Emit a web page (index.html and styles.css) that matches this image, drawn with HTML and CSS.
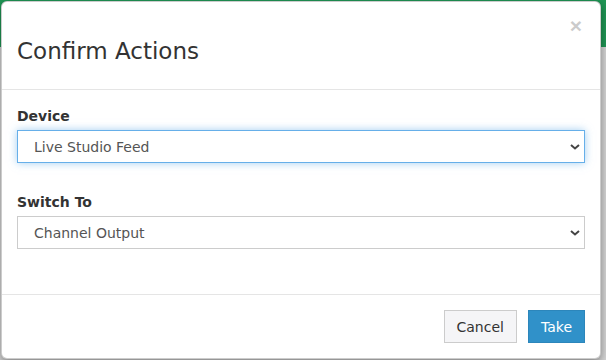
FILE: index.html
```html
<!DOCTYPE html>
<html lang="en">
<head>
  <meta charset="UTF-8">
  <meta name="viewport" content="width=device-width, initial-scale=1.0">
  <title>Confirm Actions</title>
  <link rel="stylesheet" href="styles.css">
</head>
<body>
  <!-- Page behind the dialog -->
  <div class="page">
    <div class="topbar"></div>
    <div class="backdrop"></div>
  </div>

  <!-- Confirm dialog -->
  <div class="modal">
    <div class="modal-header">
      <h4 class="modal-title">Confirm Actions</h4>
      <button type="button" class="close">&times;</button>
    </div>

    <div class="modal-body">
      <div class="form-group">
        <label for="device">Device</label>
        <div class="select-wrap">
          <select id="device" class="form-control focused">
            <option>Live Studio Feed</option>
          </select>
          <svg class="chevron" width="10" height="6" viewBox="0 0 10 6"><path d="M1 1l4 3.5L9 1" fill="none" stroke="#444" stroke-width="2"/></svg>
        </div>
      </div>
      <div class="form-group">
        <label for="switch-to">Switch To</label>
        <div class="select-wrap">
          <select id="switch-to" class="form-control">
            <option>Channel Output</option>
          </select>
          <svg class="chevron" width="10" height="6" viewBox="0 0 10 6"><path d="M1 1l4 3.5L9 1" fill="none" stroke="#444" stroke-width="2"/></svg>
        </div>
      </div>
    </div>

    <div class="modal-footer">
      <button type="button" class="btn btn-default">Cancel</button>
      <button type="button" class="btn btn-primary">Take</button>
    </div>
  </div>
</body>
</html>
```

FILE: styles.css
```css
* {
  margin: 0;
  padding: 0;
  box-sizing: border-box;
}

body {
  font-family: 'DejaVu Sans', Verdana, sans-serif;
  font-size: 14px;
  color: #333;
  width: 606px;
  height: 360px;
  overflow: hidden;
}

/* Background page */
.page {
  height: 360px;
  display: flex;
  flex-direction: column;
}

.topbar {
  height: 47px;
  background-color: #1f9554;
}

.backdrop {
  flex: 1;
  background-color: #d4d4d4;
}

/* Dialog */
.modal {
  position: absolute;
  top: 1px;
  left: 1px;
  width: 600px;
  background-color: #fff;
  border: 1px solid rgba(0, 0, 0, 0.2);
  border-radius: 6px;
  box-shadow: 0 3px 9px rgba(0, 0, 0, 0.4);
}

.modal-header {
  display: flex;
  justify-content: space-between;
  align-items: flex-start;
  padding: 15px 18px 25px 15px;
  border-bottom: 1px solid #e5e5e5;
}

.modal-title {
  margin-top: 21px;
  font-size: 23px;
  font-weight: 400;
  line-height: 26px;
  color: #333;
}

.close {
  margin-top: -2px;
  border: 0;
  background: none;
  font-family: 'Liberation Sans', sans-serif;
  font-size: 21px;
  font-weight: bold;
  line-height: 1;
  color: #000;
  opacity: 0.2;
  cursor: pointer;
}

.modal-body {
  padding: 15px 15px 17px;
}

.form-group {
  margin-bottom: 28px;
}

label {
  display: block;
  margin-bottom: 3px;
  font-weight: 700;
  line-height: 22px;
}

.select-wrap {
  position: relative;
}

.form-control {
  display: block;
  width: 100%;
  height: 33px;
  padding: 0 16px;
  font-family: inherit;
  font-size: 14px;
  color: #555;
  background-color: #fff;
  border: 1px solid #ccc;
  border-radius: 0;
  -webkit-appearance: none;
  appearance: none;
}

.form-control.focused {
  border-color: #66afe9;
  box-shadow: 0 0 8px rgba(102, 175, 233, 0.6);
}

.chevron {
  position: absolute;
  right: 5px;
  top: 14px;
}

.modal-footer {
  display: flex;
  justify-content: flex-end;
  gap: 11px;
  padding: 15px;
  border-top: 1px solid #e5e5e5;
}

.btn {
  height: 33px;
  padding: 0 12px;
  font-family: inherit;
  font-size: 14px;
  border: 1px solid transparent;
  border-radius: 0;
  cursor: pointer;
}

.btn-default {
  color: #333;
  background-color: #f5f5f7;
  border-color: #ccc;
}

.btn-primary {
  color: #fff;
  background-color: #3091c9;
  border-color: #2c86bb;
}
```
